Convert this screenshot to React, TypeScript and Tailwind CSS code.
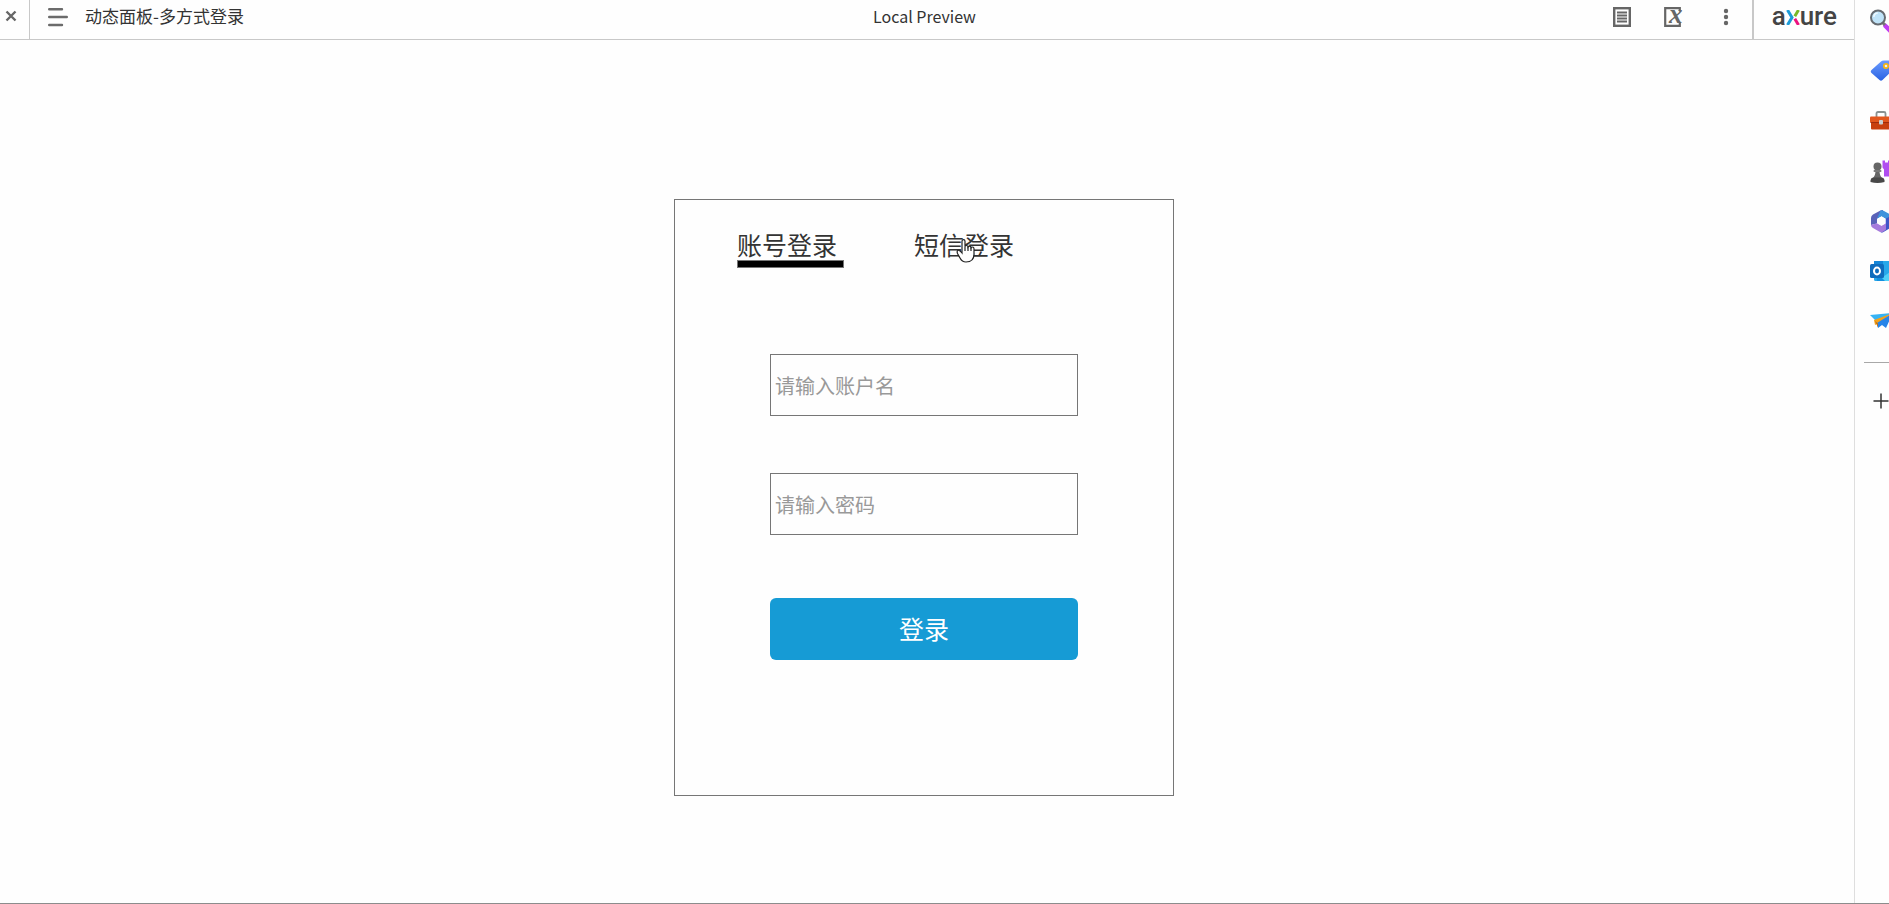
import React, { useState } from 'react';

const CloseIcon = () => (
  <svg className="w-3 h-3" viewBox="0 0 12 12" fill="none" stroke="#666" strokeWidth="2.4">
    <path d="M1.5 1.5l9 9M10.5 1.5l-9 9" />
  </svg>
);

const MenuIcon = () => (
  <svg className="w-5 h-5" viewBox="0 0 20 20" fill="none" stroke="#6b6b6b" strokeWidth="2.4" strokeLinecap="round">
    <path d="M1.2 2.2h12.8M1.2 10h17.6M1.2 18h12.8" />
  </svg>
);

const NotesIcon = () => (
  <svg className="w-5 h-5" viewBox="0 0 20 20" fill="none" stroke="#666" strokeWidth="2.4">
    <rect x="2.2" y="1.2" width="15.6" height="17.6" />
    <path d="M5 5.500h10M5 8.500h10M5 11.500h10M5 14.500h10" strokeWidth="1.800" />
  </svg>
);

const VariablesIcon = () => (
  <svg className="w-5 h-5 overflow-visible" viewBox="0 0 20 20" fill="none" stroke="#666" strokeWidth="2.2">
    <path d="M15.800 4V1.200H1.200v17.600h14.600V16" />
    <text x="5" y="16" fontSize="27" fontStyle="italic" fontWeight="bold" fontFamily="Liberation Serif, serif" fill="#666" stroke="none">
      x
    </text>
  </svg>
);

const MoreIcon = () => (
  <svg className="w-5 h-5" viewBox="0 0 20 20" fill="#666">
    <circle cx="10" cy="4" r="2.2" />
    <circle cx="10" cy="10" r="2.2" />
    <circle cx="10" cy="16" r="2.2" />
  </svg>
);

const AxureLogo = () => (
  <div className="flex items-baseline pt-[2px] font-['Roboto',sans-serif] text-[26px] leading-7 font-medium text-[#444]">
    <span>a</span>
    <svg className="w-[14px] h-[15px] shrink-0" viewBox="0 0 14 15" fill="none" strokeWidth="3">
      <path d="M1.500 0L6 7.500 1.500 15" stroke="#1b9bd8" />
      <path d="M12.500 0L8.800 6.200" stroke="#78b928" />
      <path d="M8.800 8.800l3.700 6.200" stroke="#ec1280" />
    </svg>
    <span>ure</span>
  </div>
);

const SearchIcon = () => (
  <svg className="w-6 h-6" viewBox="0 0 24 24">
    <path d="M16.500 17l6 6" stroke="#c13cf5" strokeWidth="4.500" strokeLinecap="round" />
    <path d="M13.500 13.500l2.500 2.500" stroke="#777" strokeWidth="3" />
    <circle cx="9" cy="8.500" r="7" fill="#bfe3f8" stroke="#666b70" strokeWidth="2" />
    <path d="M4.800 8a4.400 4.400 0 0 1 4-4" stroke="#eef9ff" strokeWidth="1.600" fill="none" />
  </svg>
);

const TagIcon = () => (
  <svg className="w-6 h-6" viewBox="0 0 24 24">
    <defs>
      <linearGradient id="tag" x1="0" y1="0" x2="0" y2="1">
        <stop offset="0" stopColor="#6b9cff" />
        <stop offset="1" stopColor="#2a62e2" />
      </linearGradient>
    </defs>
    <path d="M12 2.500Q13 1.500 15 1.500h7q1.500 0 1.500 1.500v7q0 1.500-1 2.500l-9 8.500q-1.500 1.500-3 0L2.500 14q-1.500-1.500 0-3z" fill="url(#tag)" />
    <circle cx="17" cy="7" r="2.200" fill="#e8f0ff" stroke="#f5b417" strokeWidth="1.800" />
  </svg>
);

const ToolboxIcon = () => (
  <svg className="w-6 h-6" viewBox="0 0 24 24">
    <path d="M7.500 8V4.500q0-1.500 1.500-1.500h6q1.500 0 1.500 1.500V8" fill="none" stroke="#8a9292" strokeWidth="1.800" />
    <rect x="2" y="11" width="20" height="9.500" rx="1" fill="#c8400f" />
    <rect x="1" y="7.500" width="22" height="6" rx="1" fill="#e2571e" />
    <path d="M1.500 13.500h21" stroke="#a02c0c" strokeWidth="1" />
    <rect x="10" y="11" width="4" height="4.500" rx="1" fill="#c8d0d2" />
  </svg>
);

const GamesIcon = () => (
  <svg className="w-6 h-6" viewBox="0 0 24 24">
    <path d="M13.500 1.500h2.500v2h3v-2h3v2h2v14h-9v-7l-1.500-2z" fill="#b04df0" />
    <path d="M6.500 11.500h4q0 5 2.500 7.500H4q2.500-2.500 2.500-7.500z" fill="#666" />
    <circle cx="8.500" cy="7.500" r="4" fill="#666" />
    <rect x="4.500" y="11" width="8" height="2" rx="1" fill="#7a7a7a" />
    <path d="M1.500 23v-1.500q0-2.500 2.500-3h9q2.500.500 2.500 3V23q-7 2-14 0z" fill="#484848" />
  </svg>
);

const OfficeIcon = () => (
  <svg className="w-6 h-6" viewBox="0 0 24 24">
    <path d="M11.500 1.500L4 5.500Q2 6.500 2 9v7l6-1.500V9.800l6-4V1z" fill="#5a62b8" />
    <path d="M11.500 1.500Q13 .8 15 2l7 4q1.500 1 1.500 3v4L17 10l-4.500-2.700L8 9.800z" fill="#3f93dc" />
    <path d="M23.500 9v7q0 2-2 3l-7 4q-2 1-3 0l5-8V9.800L20 8z" fill="#3f56c8" />
    <path d="M2 10v6q0 2 2 3l6.500 3.700q2 1 4-.2l2.500-2v-6.300l-4.500 2.600L8 14.200 2 16z" fill="#a67bdc" />
    <path d="M12.500 7.500l4 2.300v4.600l-4 2.300-4-2.300V9.800z" fill="#fefefe" />
  </svg>
);

const OutlookIcon = () => (
  <svg className="w-6 h-6" viewBox="0 0 24 24">
    <rect x="5" y="2" width="19" height="20" rx="1.500" fill="#28a8ea" />
    <path d="M5 2h9v8H5z" fill="#1386d8" />
    <path d="M24 11v11H8z" fill="#50d0f8" />
    <path d="M7 13l9 9H8z" fill="#1490df" />
    <rect x="1" y="5" width="14" height="14" rx="1.500" fill="#0f6cbd" />
    <ellipse cx="8" cy="12" rx="3" ry="3.400" fill="none" stroke="#fff" strokeWidth="2" />
  </svg>
);

const PlaneIcon = () => (
  <svg className="w-6 h-6" viewBox="0 0 24 24">
    <path d="M1 6l23-2-17 8z" fill="#36b3f4" />
    <path d="M5 11l19-7-14 10-4 2z" fill="#f3a11b" />
    <path d="M24 4l-7 15-4-3-4 3-1-5z" fill="#2684e8" />
    <path d="M6 12l3 2.500v4z" fill="#c26e12" />
  </svg>
);

const PlusIcon = () => (
  <svg className="w-6 h-6" viewBox="0 0 24 24" stroke="#333" strokeWidth="1.500">
    <path d="M12 4.500v15M4.500 12h15" />
  </svg>
);

const HandCursor = () => (
  <svg className="absolute left-[42px] top-[8px] w-[20px] h-[26px] pointer-events-none" viewBox="0 0 20 26">
    <path
      d="M6 15V3.200q0-1.600 1.500-1.600T9 3.200V8.500q.300-1 1.500-1t1.500 1.500q.400-.900 1.500-.900t1.500 1.600q.300-.700 1.400-.700 1.600 0 1.600 1.800V16q0 8-8 8-4 0-6-4l-2.500-4.500Q.600 13 2 12.300q1.500-.500 4 2.700z"
      fill="#fff"
      stroke="#222"
      strokeWidth="1.200"
    />
    <path d="M9 8.500V13M12 9v4M15 9.700V13" stroke="#222" strokeWidth="1.200" />
  </svg>
);

const sidebarItems = [
  { label: 'Search', icon: SearchIcon },
  { label: 'Shopping', icon: TagIcon },
  { label: 'Tools', icon: ToolboxIcon },
  { label: 'Games', icon: GamesIcon },
  { label: 'Microsoft 365', icon: OfficeIcon },
  { label: 'Outlook', icon: OutlookIcon },
  { label: 'Drop', icon: PlaneIcon },
];

const tabs = [
  { id: 'account', label: '账号登录' },
  { id: 'sms', label: '短信登录' },
];

const inputClass =
  'block w-full h-[62px] border border-[#767676] bg-[#fefefe] pl-1 text-[20px] text-[#333] placeholder:text-[#999] outline-none';

const App: React.FC = () => {
  const [activeTab, setActiveTab] = useState('account');

  return (
    <div className="flex min-h-screen bg-[#fefefe] border-b border-[#8c8c8c] text-[#333] font-['Noto_Sans_CJK_SC',sans-serif]">
      <div className="flex-1 min-w-0">
        {/* Header */}
        <header className="grid grid-cols-[1fr_auto_1fr] h-10 pr-[5px] border-b border-[#c8c8c8]">
          <div className="flex">
            <button aria-label="Close" className="flex justify-center w-[30px] pt-[10px] pr-[7px] border-r border-[#c8c8c8]">
              <CloseIcon />
            </button>
            <button aria-label="Pages" className="flex items-start pt-[7px] ml-[18px]">
              <MenuIcon />
            </button>
            <h1 className="ml-[17px] pt-1 text-[17px] leading-6">动态面板-多方式登录</h1>
          </div>
          <div className="pt-1 text-[16px] leading-6">Local Preview</div>
          <div className="flex justify-end">
            <div className="flex items-start gap-8 pt-[7px] pr-4">
              <button aria-label="Notes"><NotesIcon /></button>
              <button aria-label="Variables"><VariablesIcon /></button>
              <button aria-label="More"><MoreIcon /></button>
            </div>
            <div className="border-l-2 border-[#c8c8c8] pl-[18px] pr-[12px]">
              <AxureLogo />
            </div>
          </div>
        </header>

        {/* Login card */}
        <main className="flex justify-center pt-[159px] pr-[6px]">
          <form className="w-[500px] border border-[#767676] pt-[30px] pb-[135px]" onSubmit={(e) => e.preventDefault()}>
            <div className="flex gap-[70px] pl-[62px]">
              {tabs.map((tab) => (
                <button
                  key={tab.id}
                  type="button"
                  onClick={() => setActiveTab(tab.id)}
                  className="relative w-[107px] text-left text-[25px] leading-7"
                >
                  {tab.label}
                  <span
                    className={`block h-2 mt-[2px] border ${
                      activeTab === tab.id ? 'bg-black border-[#767676]' : 'border-transparent'
                    }`}
                  />
                  {tab.id === 'sms' && <HandCursor />}
                </button>
              ))}
            </div>
            <div className="px-[95px] pt-[86px]">
              <input aria-label="账户名" type="text" placeholder="请输入账户名" className={inputClass} />
              <input aria-label="密码" type="password" placeholder="请输入密码" className={`${inputClass} mt-[57px]`} />
              <button type="submit" className="block w-full h-[62px] mt-[63px] rounded-md bg-[#169bd5] text-white text-[25px]">
                登录
              </button>
            </div>
          </form>
        </main>
      </div>

      {/* Browser sidebar */}
      <aside className="w-[35px] shrink-0 overflow-hidden border-l border-[#dedede]">
        <div className="flex flex-col items-center w-[52px] pt-[9px]">
          <div className="flex flex-col gap-[26px]">
            {sidebarItems.map(({ label, icon: Icon }) => (
              <button key={label} aria-label={label}>
                <Icon />
              </button>
            ))}
          </div>
          <div className="w-[34px] mt-[29px] border-t border-[#a8a8a8]" />
          <button aria-label="Add" className="mt-[26px]">
            <PlusIcon />
          </button>
        </div>
      </aside>
    </div>
  );
};

export default App;
